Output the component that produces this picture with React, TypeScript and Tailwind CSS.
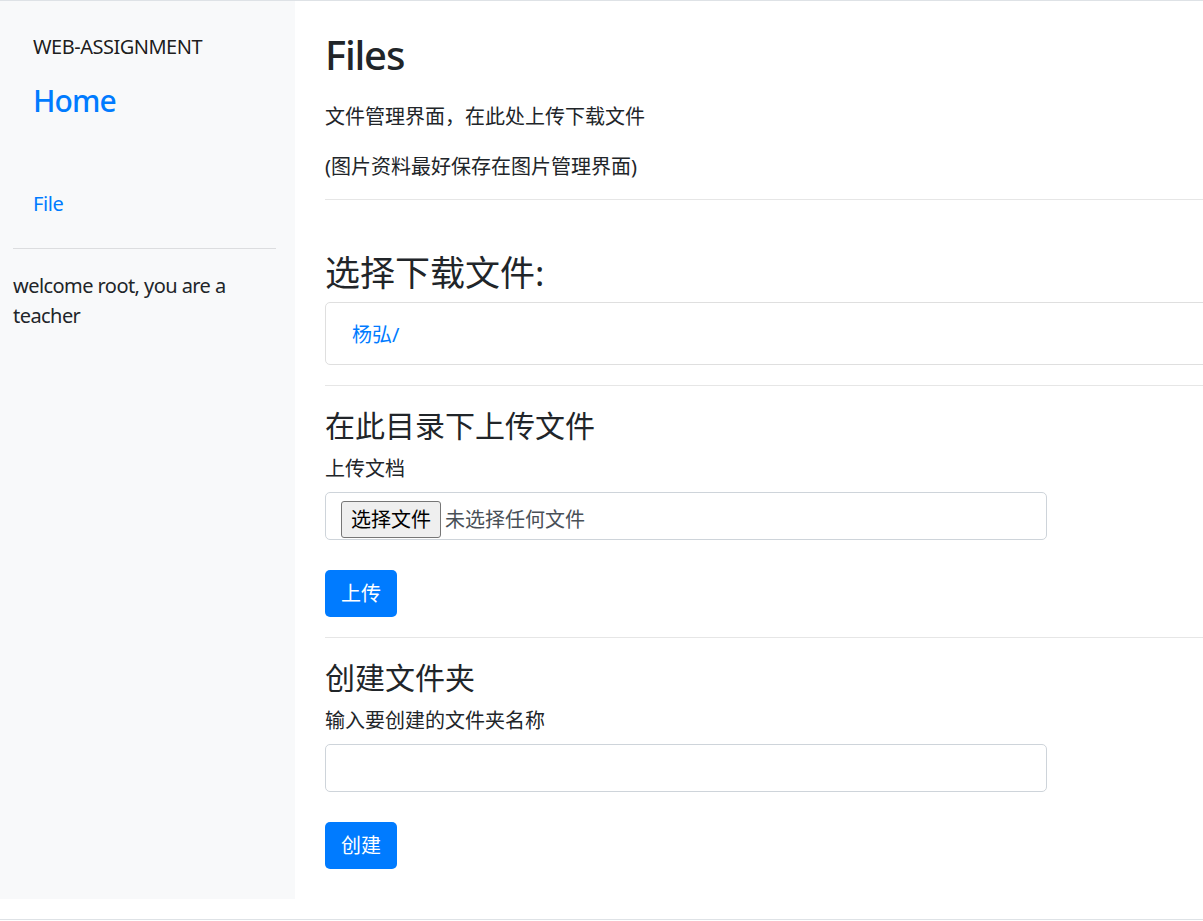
const FONT = "font-['Noto_Sans','Noto_Sans_CJK_SC',sans-serif]"

export default function App() {
  return (
    <div className={`${FONT} h-[921px] overflow-hidden bg-white text-[#212529] text-[20px] leading-[30px]`}>
      <div className="flex border-t border-[#dee2e6]">
        {/* sidebar */}
        <aside className="w-[295px] h-[898px] shrink-0 bg-[#f8f9fa] pl-[13px]">
          <div className="w-[263px]">
            <div className="pl-[20px] pt-[31px] text-[20px] leading-[30px] tracking-[-0.025em] text-black/90">WEB-ASSIGNMENT</div>
            <div className="pl-[20px] mt-[21px] text-[30px] leading-[36px] font-medium tracking-[-0.03em] text-[#007bff]">Home</div>
            <div className="pl-[20px] mt-[70px] tracking-[-0.02em] text-[#007bff]">File</div>
            <hr className="mt-[29px] border-t border-[#dcdddf]" />
            <p className="mt-[22px] tracking-[-0.028em]">welcome root, you are a teacher</p>
          </div>
        </aside>

        {/* main */}
        <main className="flex-1 min-w-0 pl-[30px]">
          <h2 className="pt-[30px] text-[40px] leading-[48px] font-medium tracking-[-0.03em]">Files</h2>
          <p className="mt-[23px]">文件管理界面，在此处上传下载文件</p>
          <p className="mt-[20px]">(图片资料最好保存在图片管理界面)</p>
          <hr className="mt-[17px] border-t border-[#e6e6e6]" />

          <h3 className="mt-[52px] text-[35px] leading-[42px]">选择下载文件:</h3>
          <div className="mt-[8px] w-[1000px] h-[63px] border border-[#dfdfdf] rounded-[5px] pl-[26px] pt-[17px]">
            <a className="text-[#007bff]">杨弘/</a>
          </div>
          <hr className="mt-[20px] border-t border-[#e6e6e6]" />

          <h4 className="mt-[22px] text-[30px] leading-[36px]">在此目录下上传文件</h4>
          <div className="mt-[10px]">上传文档</div>
          <div className="mt-[8px] w-[722px] h-[48px] border border-[#ced4da] rounded-[5px] px-[15px] pt-[8px] flex items-start">
            <span className="h-[37px] px-[9px] flex items-center bg-[#efefef] border border-[#767676] rounded-[3px] text-black">选择文件</span>
            <span className="ml-[4px] mt-[4px] text-[#495057]">未选择任何文件</span>
          </div>
          <button className="mt-[30px] h-[47px] px-[16px] rounded-[5px] bg-[#007bff] text-white">上传</button>
          <hr className="mt-[20px] border-t border-[#e6e6e6]" />

          <h4 className="mt-[22px] text-[30px] leading-[36px]">创建文件夹</h4>
          <div className="mt-[10px]">输入要创建的文件夹名称</div>
          <div className="mt-[8px] w-[722px] h-[48px] border border-[#ced4da] rounded-[5px]" />
          <button className="mt-[30px] h-[47px] px-[16px] rounded-[5px] bg-[#007bff] text-white">创建</button>
        </main>
      </div>
      <div className="mt-[20px] border-t border-[#dee2e6]" />
    </div>
  )
}
